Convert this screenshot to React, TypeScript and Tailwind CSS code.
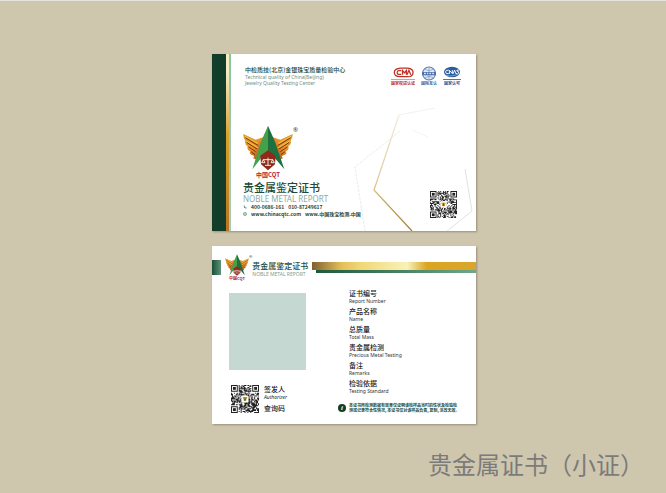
const latin = "font-['Noto_Sans','Noto_Sans_CJK_SC',sans-serif]";
const cjk = "font-['Noto_Sans_CJK_SC','Noto_Sans',sans-serif]";

const fields = [
  ['证书编号', 'Report Number'],
  ['产品名称', 'Name'],
  ['总质量', 'Total Mass'],
  ['贵金属检测', 'Precious Metal Testing'],
  ['备注', 'Remarks'],
  ['检验依据', 'Testing Standard'],
];

function Wing() {
  return (
    <g>
      <path d="M113 57L150 74L174 66L160 136L142 130Q150 122 138 120Q128 116 134 110Q122 104 126 94Q116 88 119 78Q112 66 113 57Z" fill="url(#wing)" />
      <path d="M119 68L158 92M123 82L154 102M129 96L150 110M136 110L148 119" stroke="#7c3310" strokeWidth="3" fill="none" />
      <path d="M118 64L156 85M122 78L156 98" stroke="#f5c64a" strokeWidth="3" fill="none" />
    </g>
  );
}

function Emblem({ className }: { className: string }) {
  return (
    <svg viewBox="112 30 150 138" className={className} role="img" aria-label="CQT">
      <defs>
        <linearGradient id="wing" x1="0" y1="0" x2="1" y2="1">
          <stop offset="0" stopColor="#d9a02a" />
          <stop offset="0.5" stopColor="#e8922a" />
          <stop offset="1" stopColor="#8c3b16" />
        </linearGradient>
      </defs>
      <Wing />
      <g transform="translate(374 0) scale(-1 1)">
        <Wing />
      </g>
      <path d="M187 32L166 80L140 163L166 130L187 108Z" fill="#45a04a" />
      <path d="M187 32L208 80L236 163L208 130L187 108Z" fill="#1f7040" />
      <path d="M187 106L210 122L208 148L187 166L166 148L164 122Z" fill="#8f2a1b" />
      <path d="M187 128V150M172 134H202M178 151H196M168 143H178L173 134ZM196 143H206L201 134Z" stroke="#f6e9dc" strokeWidth="3" fill="none" />
    </svg>
  );
}

function isFinder(x: number, y: number, n: number) {
  return (x < 8 && y < 8) || (x >= n - 8 && y < 8) || (x < 8 && y >= n - 8);
}

function QrCode({ className, seed }: { className: string; seed: number }) {
  const n = 29;
  let state = seed;
  let d = '';
  for (let y = 0; y < n; y++) {
    for (let x = 0; x < n; x++) {
      state = (state * 1103515245 + 12345) % 2147483648;
      if (!isFinder(x, y, n) && state / 2147483648 > 0.42) d += `M${x} ${y}h1v1h-1z`;
    }
  }
  return (
    <svg viewBox="0 0 29 29" className={className} role="img" aria-label="QR">
      <path d={d} fill="#222" />
      {[[0, 0], [22, 0], [0, 22]].map(([x, y]) => (
        <g key={`${x}-${y}`} fill="#222">
          <path d={`M${x} ${y}h7v7h-7z M${x + 1} ${y + 1}v5h5v-5z`} />
          <path d={`M${x + 2} ${y + 2}h3v3h-3z`} />
        </g>
      ))}
      <rect x="11" y="11" width="7" height="7" rx="1" fill="#fff" />
      <path d="M12 12.500h5l-1.500 4h-2z" fill="#d79a25" />
      <path d="M14.500 12l1 4h-2z" fill="#2b6b3b" />
    </svg>
  );
}

function CmaMark() {
  return (
    <svg viewBox="0 0 66 34" className="h-[11px] w-[21px]" role="img" aria-label="CMA">
      <path d="M24 3H46Q63 5 63 16Q63 28 51 30M24 3Q4 5 4 16Q4 30 22 30H50" fill="none" stroke="#bd3026" strokeWidth="4" />
      <path d="M26 11H18Q13 11 13 17Q13 23 18 23H26M30 24V11L36 18L42 11V24M44 24L50 10L56 24" fill="none" stroke="#bd3026" strokeWidth="4" />
    </svg>
  );
}

function GlobeMark() {
  return (
    <svg viewBox="0 0 44 42" className="h-[15px] w-[16px]" role="img" aria-label="ILAC">
      <circle cx="22" cy="21" r="18" fill="#e3eaf5" stroke="#5f7fb4" strokeWidth="3" />
      <path d="M22 3V39M8 9Q22 17 36 9M8 33Q22 25 36 33" fill="none" stroke="#7c97c4" strokeWidth="2" />
      <path d="M3 17H41V26H3Z" fill="#4669a7" />
      <path d="M8 21H13M16 21H20M23 21H28M31 21H36" stroke="#dce5f3" strokeWidth="4" />
    </svg>
  );
}

function CnasMark() {
  return (
    <svg viewBox="0 0 56 36" className="h-[12px] w-[18px]" role="img" aria-label="CNAS">
      <ellipse cx="28" cy="18" rx="25" ry="16" fill="#2a5d9b" />
      <path d="M18 12Q8 11 8 18Q8 25 18 23M20 24V13L29 23V12M31 24L36 12L41 24M50 12Q42 10 43 15Q51 17 49 21Q46 25 41 23" fill="none" stroke="#fff" strokeWidth="3" />
      <path d="M10 28Q28 35 50 22" fill="none" stroke="#aac7e6" strokeWidth="2" />
    </svg>
  );
}

function CardFront() {
  return (
    <article className="relative flex h-[177px] w-[264px] overflow-hidden bg-white shadow-[1px_1px_2px_#998f78]">
      <svg viewBox="0 0 264 177" className="absolute inset-0 size-full" aria-hidden="true">
        <defs>
          <linearGradient id="line" x1="0" y1="0" x2="0" y2="1">
            <stop offset="0" stopColor="#f2ecda" />
            <stop offset="0.6" stopColor="#dcc48c" />
            <stop offset="1" stopColor="#a07a22" />
          </linearGradient>
        </defs>
        <path d="M187 61L162 136L200 177" fill="none" stroke="url(#line)" strokeWidth="1.200" />
        <path d="M187 61L223 54" fill="none" stroke="#dfe2df" strokeWidth="0.700" strokeDasharray="2 1" />
        <path d="M188 77L143 113L153 177" fill="none" stroke="#dee6e4" strokeWidth="0.700" strokeDasharray="3 1" />
        <path d="M200 76L216 83" fill="none" stroke="#eceeed" strokeWidth="0.700" />
        <path d="M253 115L260 157L235 177" fill="none" stroke="#d8dada" strokeWidth="0.800" />
      </svg>
      <div className="w-[14px] shrink-0 bg-[#123d2a]" />
      <div className="w-[3px] shrink-0 bg-linear-to-b from-[#f3edc4] from-10% via-[#dda22a] via-45% to-[#b8741f]" />
      <div className="w-[2px] shrink-0 bg-linear-to-b from-[#8cc4a0] to-[#a9ccb6]" />
      <div className="relative flex min-w-0 flex-1 flex-col pt-[12px] pl-[12px]">
        <header className="flex justify-between pr-[15px] pl-[2px]">
          <div>
            <h2 className={`${cjk} text-[6px] leading-[8px] font-medium whitespace-nowrap text-[#173f30]`}>
              中检质技(北京)金银珠宝质量检验中心
            </h2>
            <p className={`${latin} text-[5px] leading-[6px] text-[#6f8f80]`}>
              Technical quality of China(Beijing)
              <br />
              Jewelry Quality Testing Center
            </p>
          </div>
          <ul className={`${cjk} flex gap-[6px] text-[4px] leading-[5px] font-bold whitespace-nowrap`}>
            <li className="flex flex-col items-center justify-end text-[#bd3026]">
              <CmaMark />
              <span className="my-px h-px w-full bg-[#dc9a92]" />
              <span>国家权威认证</span>
            </li>
            <li className="flex flex-col items-center justify-end text-[#3f64a4]">
              <GlobeMark />
              <span>国际互认</span>
            </li>
            <li className="flex flex-col items-center justify-end text-[#1f4f8d]">
              <CnasMark />
              <span className="my-px h-px w-full bg-[#4c77ab]" />
              <span>国家认可</span>
            </li>
          </ul>
        </header>
        <div className="mt-[39px] flex items-start">
          <div className="flex flex-col items-center">
            <Emblem className="h-[46px] w-[50px]" />
            <p className={`${cjk} text-[6px] leading-[8px] font-bold text-[#b2262c]`}>中国CQT</p>
          </div>
          <span className={`${latin} pt-px text-[6px] leading-[8px] text-[#333]`}>®</span>
        </div>
        <div className="flex items-start justify-between pr-[19px]">
          <div className="whitespace-nowrap">
            <h1 className={`${cjk} text-[11px] leading-[16px] font-medium text-[#1d4a37]`}>贵金属鉴定证书</h1>
            <p className={`${latin} text-[8px] leading-[8px] text-[#8fab9d]`}>NOBLE METAL REPORT</p>
            <p className={`${cjk} flex items-center gap-[4px] text-[5px] leading-[7px] font-bold text-[#24483a]`}>
              <svg viewBox="0 0 10 10" className="size-[4px]" aria-hidden="true">
                <path d="M2 1Q1 8 9 9L9 6L6 6L4 4V1Z" fill="#3d8068" />
              </svg>
              <span>400-0686-161</span>
              <span>010-87249617</span>
            </p>
            <p className={`${cjk} flex items-center gap-[4px] text-[5px] leading-[7px] font-bold text-[#24483a]`}>
              <svg viewBox="0 0 10 10" className="size-[4px]" aria-hidden="true">
                <circle cx="5" cy="5" r="4" fill="#b9d3c6" stroke="#5d9079" strokeWidth="1.500" />
              </svg>
              <span>www.chinacqtc.com</span>
              <span>www.中国珠宝检测.中国</span>
            </p>
          </div>
          <QrCode className="mt-[12px] size-[27px]" seed={17} />
        </div>
      </div>
    </article>
  );
}

function CardBack() {
  return (
    <article className="flex h-[178px] w-[264px] flex-col bg-white pt-[8px] shadow-[1px_1px_2px_#998f78]">
      <header className="flex h-[29px] items-start">
        <div className="mt-[6px] h-[15px] w-[9px] bg-linear-to-r from-[#195038] to-[#5d9478]" />
        <div className="ml-[4px] flex flex-col items-center">
          <Emblem className="h-[22px] w-[24px]" />
          <p className={`${cjk} text-[4px] leading-[5px] font-bold text-[#b2262c]`}>中国CQT</p>
        </div>
        <span className={`${latin} text-[4px] leading-[5px] text-[#333]`}>®</span>
        <div className="mt-[7px] w-[60px] whitespace-nowrap">
          <h2 className={`${cjk} text-[8px] leading-[10px] font-medium text-[#1d4a37]`}>贵金属鉴定证书</h2>
          <p className={`${latin} text-[5px] leading-[6px] text-[#7d9c8d]`}>NOBLE METAL REPORT</p>
        </div>
        <div className="mt-[8px] flex-1">
          <div className="h-[8px] bg-[linear-gradient(to_right,#80612f,#e3bf5a_18%,#f0d878_30%,#f8f2b8_58%,#dba51f_70%,#d9a52e)]" />
          <div className="ml-[4px] h-[3px] bg-linear-to-r from-[#1d5a3b] to-[#6fa888]" />
        </div>
      </header>
      <div className="flex flex-1 pl-[17px]">
        <div className="w-[109px]">
          <div className="mt-[10px] size-[77px] bg-[#c5d9d2]" />
          <div className="mt-[15px] flex gap-[5px] pl-[2px]">
            <QrCode className="size-[28px]" seed={91} />
            <div className={`${cjk} text-[7px] leading-[9px] font-medium text-[#222]`}>
              <p>签发人</p>
              <p className={`${latin} text-[5px] leading-[6px] font-normal italic`}>Authorizer</p>
              <p className="mt-[4px]">查询码</p>
            </div>
          </div>
        </div>
        <div>
          <dl className="mt-[6px] pl-[11px]">
            {fields.map(([zh, en]) => (
              <div key={en} className="h-[18px]">
                <dt className={`${cjk} text-[7px] leading-[9px] font-medium text-[#222]`}>{zh}</dt>
                <dd className={`${latin} text-[5px] leading-[6px] text-[#333]`}>{en}</dd>
              </div>
            ))}
          </dl>
          <footer className="mt-[6px] flex items-center gap-[3px]">
            <span className="flex size-[8px] items-center justify-center rounded-full bg-[#123d2a] font-['Liberation_Serif',serif] text-[7px] leading-none font-bold text-white italic">
              i
            </span>
            <p className={`${cjk} text-[4px] leading-[5px] font-bold whitespace-nowrap text-[#1b4a35]`}>
              本证书所检测数据有效果仅证明该检样品当时的性状及检验检
              <br />
              测或记录符合性情况, 本证书仅对该样品负责, 复制, 涂改无效。
            </p>
          </footer>
        </div>
      </div>
    </article>
  );
}

export default function App() {
  return (
    <main className="flex min-h-screen flex-col items-center border-t border-[#e2e3dc] bg-[#cfc6ae] pt-[53px]">
      <div className="flex flex-col gap-[15px] pl-[22px]">
        <CardFront />
        <CardBack />
      </div>
      <p className={`${cjk} mt-[22px] self-end pr-[22px] text-[24px] leading-[36px] text-[#7b7b7b]`}>贵金属证书（小证）</p>
    </main>
  );
}
